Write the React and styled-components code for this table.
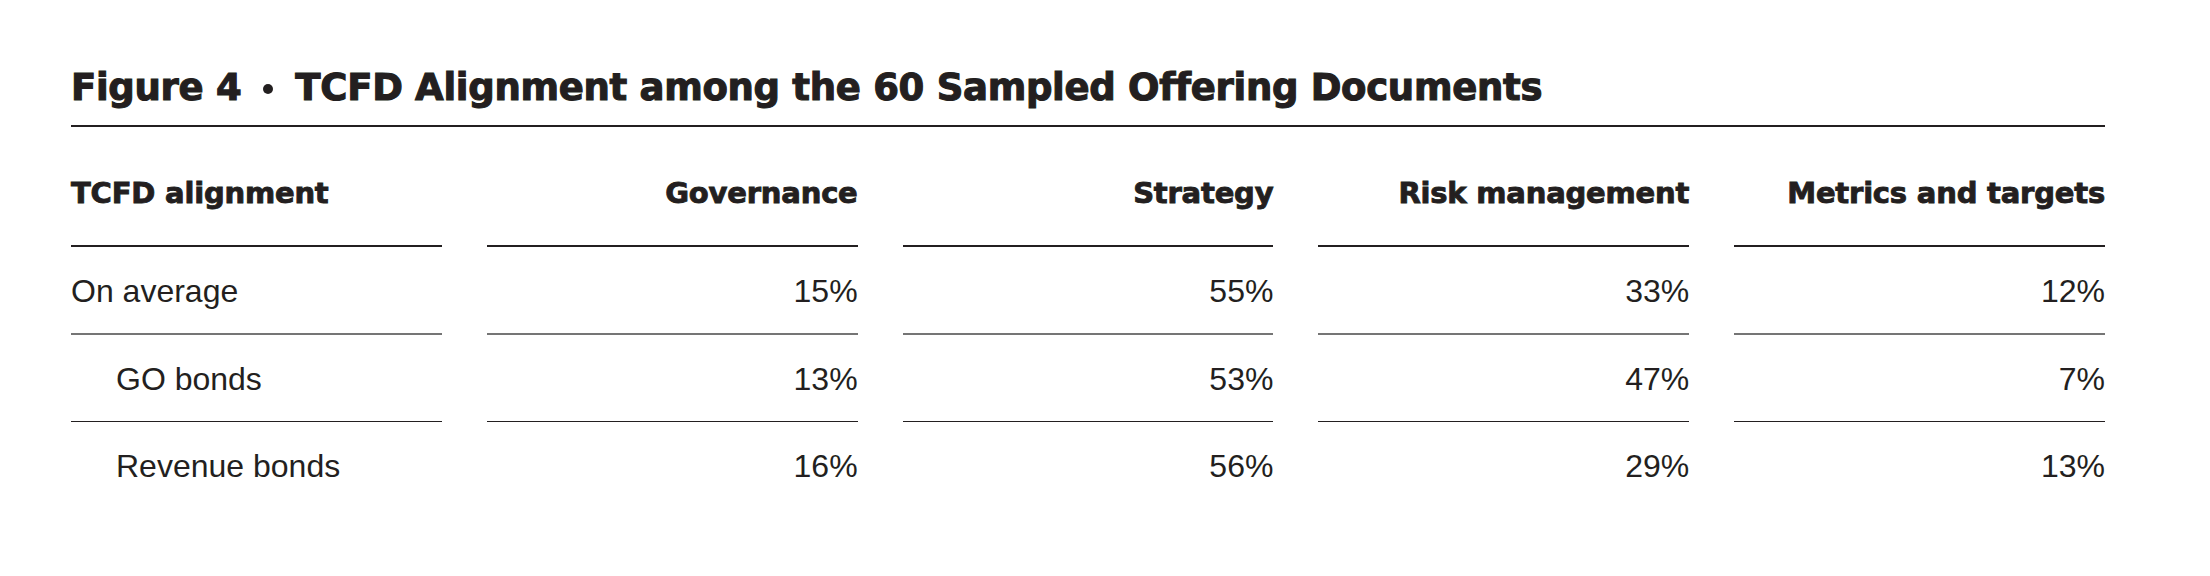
import React from "react";
import styled, { createGlobalStyle } from "styled-components";

const GlobalStyle = createGlobalStyle`
  html, body {
    margin: 0;
    padding: 0;
    background: #ffffff;
  }
  body {
    font-family: "Liberation Sans", Arial, sans-serif;
    color: #231f20;
  }
`;

const rows = [
  { label: "On average", values: ["15%", "55%", "33%", "12%"], indent: false, rule: "grey" },
  { label: "GO bonds", values: ["13%", "53%", "47%", "7%"], indent: true, rule: "dark" },
  { label: "Revenue bonds", values: ["16%", "56%", "29%", "13%"], indent: true, rule: "none" },
];

const headers = ["Governance", "Strategy", "Risk management", "Metrics and targets"];

const App = () => {
  return (
    <>
      <GlobalStyle />
      <StFigure>
        <StTitle>
          <span>Figure 4</span>
          <StDot />
          <span>TCFD Alignment among the 60 Sampled Offering Documents</span>
        </StTitle>
        <StTable>
          <StHeadCell>TCFD alignment</StHeadCell>
          {headers.map((h) => (
            <StHeadCell key={h} $right>
              {h}
            </StHeadCell>
          ))}
          {rows.map((row) => (
            <React.Fragment key={row.label}>
              <StCell $rule={row.rule} $indent={row.indent}>
                {row.label}
              </StCell>
              {row.values.map((v, i) => (
                <StCell key={i} $rule={row.rule} $right>
                  {v}
                </StCell>
              ))}
            </React.Fragment>
          ))}
        </StTable>
      </StFigure>
    </>
  );
};

export default App;

/* figure + title */
const StFigure = styled.section`
  width: 2034px;
  padding: 69px 105px 0 71px;
`;

const StTitle = styled.h2`
  display: flex;
  align-items: center;
  margin: 0;
  padding-bottom: 19px;
  border-bottom: 2px solid #231f20;
  font-family: "DejaVu Sans", sans-serif;
  font-weight: 700;
  font-size: 37px;
  line-height: 37px;
  letter-spacing: -0.3px;
  color: #231f20;
  -webkit-text-stroke: 1.1px #231f20; /* 더 두꺼운 black 굵기 흉내 */
`;

const StDot = styled.span`
  display: inline-block;
  width: 10px;
  height: 10px;
  border-radius: 50%;
  background: #231f20;
  margin: 2px 22px 0 22px;
`;

/* table */
const StTable = styled.div`
  display: grid;
  grid-template-columns: repeat(5, 1fr);
  column-gap: 45px;
  margin-top: 52px;
`;

const StHeadCell = styled.div`
  font-family: "DejaVu Sans", sans-serif;
  font-weight: 700;
  font-size: 29px;
  line-height: 29px;
  letter-spacing: -0.2px;
  -webkit-text-stroke: 0.9px #231f20;
  padding-bottom: 37px;
  border-bottom: 2px solid #231f20;
  text-align: ${(p) => (p.$right ? "right" : "left")};
  white-space: nowrap;
`;

const ruleStyles = {
  grey: "2px solid #757575",
  dark: "1px solid #231f20",
  none: "none",
};

const StCell = styled.div`
  font-family: "Liberation Sans", Arial, sans-serif;
  font-size: 32px;
  line-height: 32px;
  padding: 28px 0 26px ${(p) => (p.$indent ? "45px" : "0")};
  border-bottom: ${(p) => ruleStyles[p.$rule]};
  text-align: ${(p) => (p.$right ? "right" : "left")};
  white-space: nowrap;
`;
